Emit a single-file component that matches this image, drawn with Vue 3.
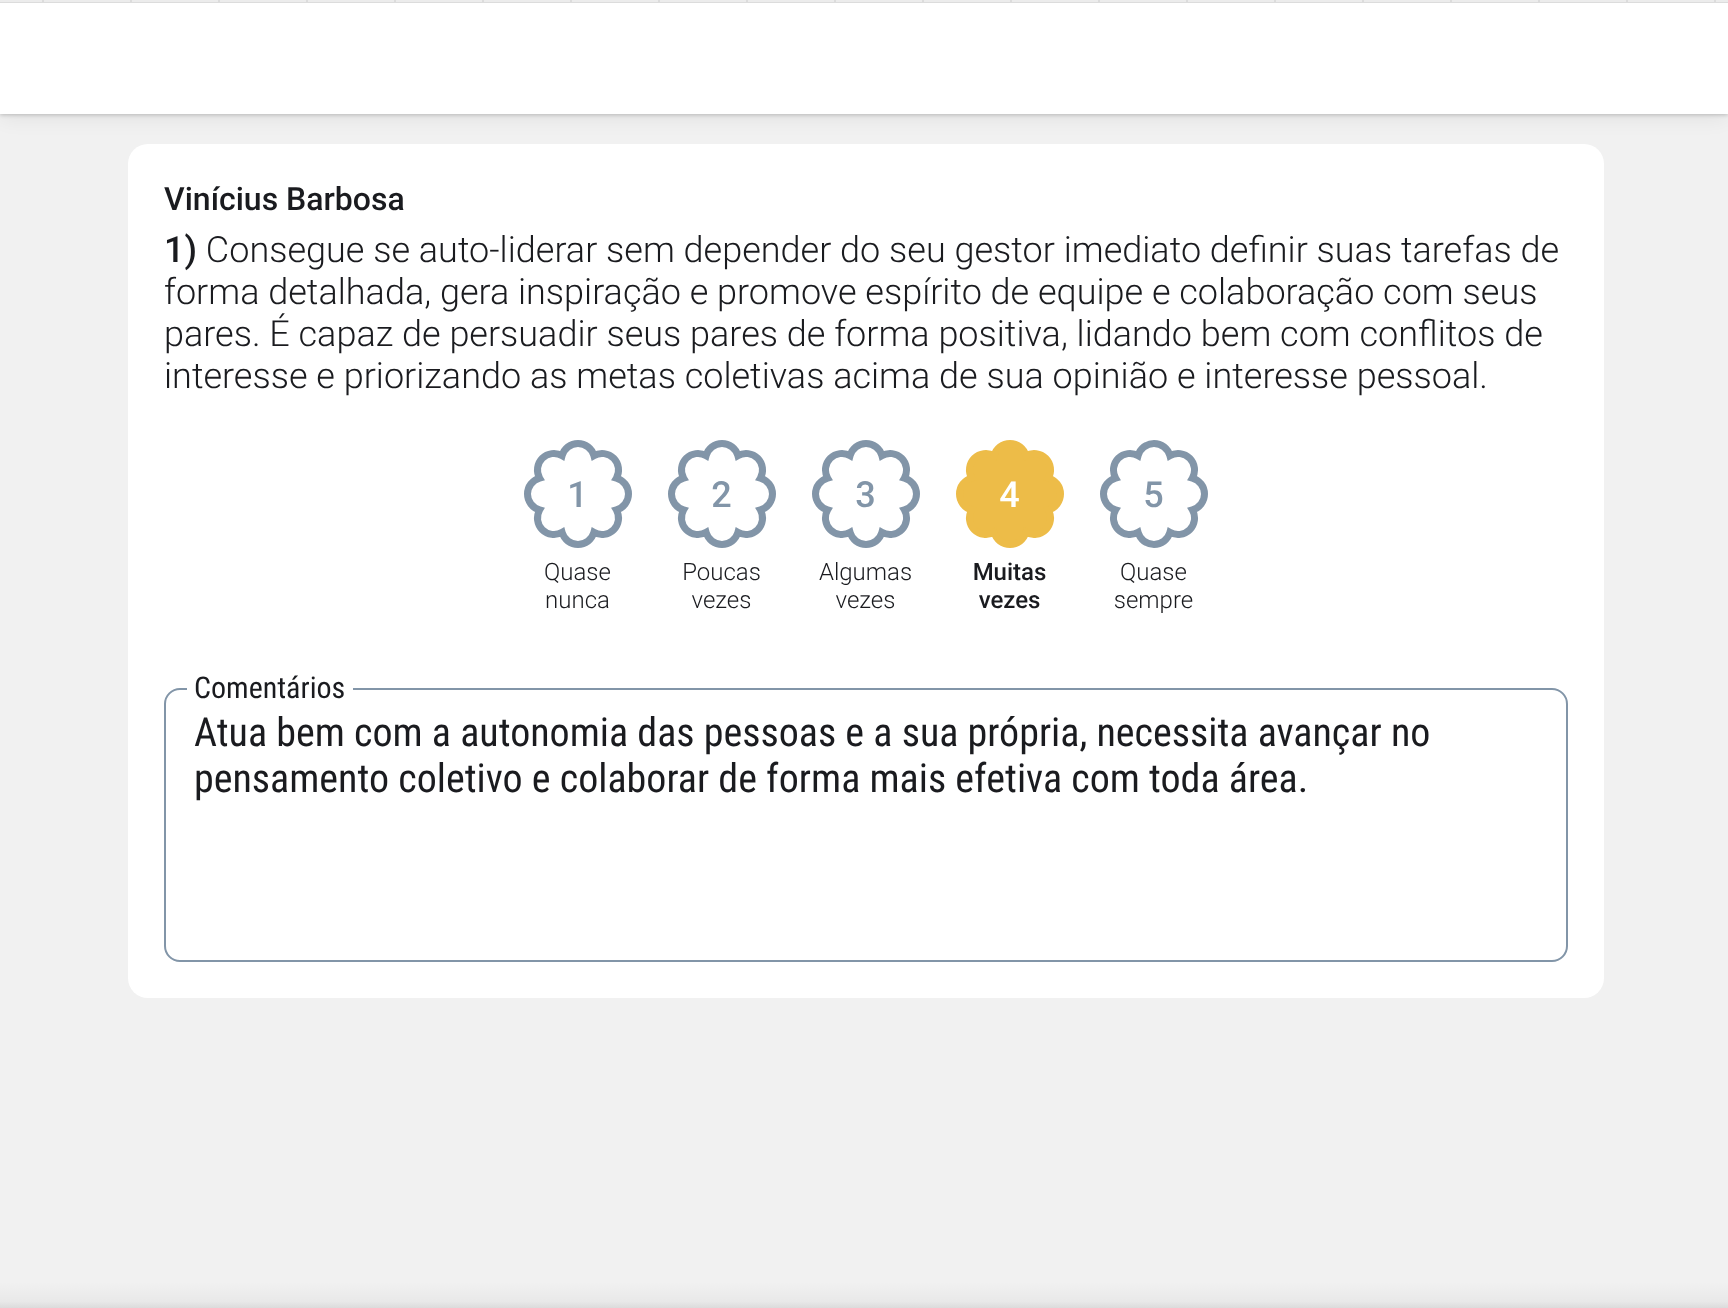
<template>
  <div class="page">
    <header class="topbar">
      <div class="ticks">
        <span v-for="n in 20" :key="n" class="tick"></span>
      </div>
    </header>

    <main class="card">
      <h3 class="name">Vinícius Barbosa</h3>
      <p class="question">
        <strong>1)</strong> Consegue se auto-liderar sem depender do seu gestor imediato definir suas tarefas de
        forma detalhada, gera inspiração e promove espírito de equipe e colaboração com seus
        pares. É capaz de persuadir seus pares de forma positiva, lidando bem com conflitos de
        interesse e priorizando as metas coletivas acima de sua opinião e interesse pessoal.
      </p>

      <div class="scale">
        <div
          v-for="option in options"
          :key="option.value"
          class="option"
          :class="{ selected: option.value === selected }"
        >
          <div class="flower">
            <svg viewBox="0 0 108 108" width="108" height="108">
              <path :d="flowerPath" />
            </svg>
            <span class="number">{{ option.value }}</span>
          </div>
          <span class="label">{{ option.first }}<br />{{ option.second }}</span>
        </div>
      </div>

      <fieldset class="comments">
        <legend>Comentários</legend>
        <p>
          Atua bem com a autonomia das pessoas e a sua própria, necessita avançar no
          pensamento coletivo e colaborar de forma mais efetiva com toda área.
        </p>
      </fieldset>
    </main>

    <div class="bottom-shadow"></div>
  </div>
</template>

<script setup>
const selected = 4;

const options = [
  { value: 1, first: 'Quase', second: 'nunca' },
  { value: 2, first: 'Poucas', second: 'vezes' },
  { value: 3, first: 'Algumas', second: 'vezes' },
  { value: 4, first: 'Muitas', second: 'vezes' },
  { value: 5, first: 'Quase', second: 'sempre' },
];

const flowerPath =
  'M38.12 15.66A16.45 16.45 0 0 1 69.88 15.66A16.45 16.45 0 0 1 92.34 38.12A16.45 16.45 0 0 1 92.34 69.88' +
  'A16.45 16.45 0 0 1 69.88 92.34A16.45 16.45 0 0 1 38.12 92.34A16.45 16.45 0 0 1 15.66 69.88' +
  'A16.45 16.45 0 0 1 15.66 38.12A16.45 16.45 0 0 1 38.12 15.66Z';
</script>

<style>
html,
body {
  margin: 0;
  background: #f1f1f1;
}
</style>

<style scoped>
.page {
  min-height: 1308px;
  display: flex;
  flex-direction: column;
  background: #f1f1f1;
  font-family: Roboto, "Liberation Sans", sans-serif;
  color: #1a1b1f;
  overflow: hidden;
  text-rendering: geometricPrecision;
}

.topbar {
  width: 100%;
  height: 114px;
  background: #fff;
  box-shadow: 0 1px 4px rgba(0, 0, 0, 0.2), 0 4px 20px rgba(0, 0, 0, 0.07);
}

.ticks {
  display: flex;
  height: 2px;
  background: #ececec;
  border-bottom: 1px solid #dcdcdc;
}

.tick {
  flex: 0 0 88px;
  box-sizing: border-box;
  border-right: 2px solid #dcdcdc;
}

.tick:first-child {
  flex-basis: 44px;
}

.card {
  box-sizing: border-box;
  width: 1476px;
  height: 854px;
  margin: 30px 0 0 128px;
  padding: 37px 36px 36px;
  background: #fff;
  border-radius: 20px;
  will-change: transform;
}

.name {
  margin: 0;
  font-size: 32px;
  line-height: 36px;
  font-weight: 500;
}

.question {
  margin: 12px 0 0;
  font-size: 36px;
  line-height: 42px;
  font-weight: 300;
}

.question strong {
  font-weight: 500;
}

.scale {
  display: flex;
  justify-content: center;
  gap: 36px;
  margin-top: 43px;
}

.option {
  width: 108px;
  display: flex;
  flex-direction: column;
  align-items: center;
}

.flower {
  position: relative;
  width: 108px;
  height: 108px;
}

.flower svg {
  display: block;
}

.flower path {
  fill: #fff;
  stroke: #8295a8;
  stroke-width: 7;
}

.number {
  position: absolute;
  inset: 1px 1px 0 0;
  display: flex;
  align-items: center;
  justify-content: center;
  font-size: 36px;
  font-weight: 500;
  color: #8295a8;
}

.label {
  margin-top: 10px;
  margin-right: 1px;
  font-size: 24px;
  line-height: 28px;
  font-weight: 300;
  text-align: center;
  white-space: nowrap;
}

.selected .flower path {
  fill: #edbc48;
  stroke: #edbc48;
}

.selected .number {
  color: #fff;
}

.selected .label {
  font-weight: 500;
}

.comments {
  box-sizing: border-box;
  height: 289px;
  margin: 59px 0 0;
  padding: 0 28px;
  border: 2px solid #8295a8;
  border-radius: 16px;
  font-stretch: 75%;
}

.comments legend {
  padding: 0 8px 0 7px;
  margin-left: -7px;
  font-size: 30px;
  line-height: 32px;
  font-stretch: 75%;
}

.comments p {
  margin: 5px 0 0;
  font-size: 40px;
  line-height: 46px;
  font-stretch: 75%;
}

.bottom-shadow {
  width: 100%;
  height: 26px;
  margin-top: auto;
  background: linear-gradient(to bottom, rgba(0, 0, 0, 0), rgba(0, 0, 0, 0.035) 75%, rgba(0, 0, 0, 0.09));
}
</style>
